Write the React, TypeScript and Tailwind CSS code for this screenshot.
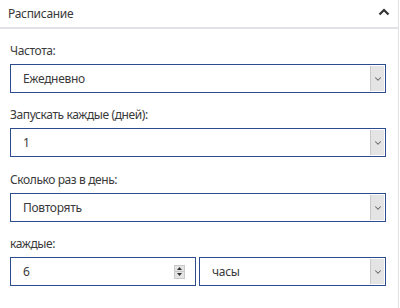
import { ChevronDown } from 'lucide-react';

const font = { fontFamily: '"Noto Sans", "Open Sans", sans-serif' };

const SelectBox = ({ value, className = '' }: { value: string; className?: string }) => (
    <div className={`flex h-[29px] items-stretch border border-[#2c4c8e] bg-white ${className}`}>
        <span className="flex flex-1 items-center pl-[12px] text-[12px] tracking-[-0.3px] text-[#3a3a3a]">{value}</span>
        <div className="my-[1px] mr-[1px] flex w-[14px] items-center justify-center border-l border-[#c9c9c9] bg-[#e4e4e4]">
            <ChevronDown className="h-[10px] w-[10px] text-[#666]" strokeWidth={2.5} />
        </div>
    </div>
);

const Label = ({ children }: { children: string }) => (
    <div className="pb-[4px] text-[12px] leading-[18px] tracking-[-0.4px] text-[#3a3a3a]">{children}</div>
);

export default function App() {
    return (
        <div className="h-[308px] w-[400px] bg-white" style={font}>
            <div className="h-full w-[399px] border-r border-[#e2e2e6]">
                {/* Header */}
                <div className="flex h-[29px] items-center justify-between border-b-2 border-[#e2e2e6] pl-[8px] pr-[8px]">
                    <span className="text-[12px] tracking-[-0.3px] text-[#3a3a3a]">Расписание</span>
                    <svg width="12" height="8" viewBox="0 0 12 8" className="mb-[3px]">
                        <path d="M1.5 6.5 L6 2 L10.5 6.5" fill="none" stroke="#333" strokeWidth="2.2" />
                    </svg>
                </div>

                <div className="flex flex-col pl-[10px] pr-[12px] pt-[13px]">
                    <Label>Частота:</Label>
                    <SelectBox value="Ежедневно" />

                    <div className="h-[13px]" />
                    <Label>Запускать каждые (дней):</Label>
                    <SelectBox value="1" />

                    <div className="h-[14px]" />
                    <Label>Сколько раз в день:</Label>
                    <SelectBox value="Повторять" />

                    <div className="h-[13px]" />
                    <Label>каждые:</Label>
                    <div className="flex gap-[3px]">
                        <div className="flex h-[29px] w-[186px] items-center border border-[#2c4c8e] bg-white pl-[12px] pr-[10px]">
                            <span className="flex-1 text-[12px] text-[#3a3a3a]">6</span>
                            <div className="flex h-[14px] w-[11px] flex-col border border-[#c9c9c9] bg-[#e4e4e4]">
                                <div className="flex flex-1 items-center justify-center border-b border-[#c9c9c9]">
                                    <svg width="5" height="3" viewBox="0 0 5 3"><path d="M0 3 L2.5 0 L5 3 Z" fill="#333" /></svg>
                                </div>
                                <div className="flex flex-1 items-center justify-center">
                                    <svg width="5" height="3" viewBox="0 0 5 3"><path d="M0 0 L2.5 3 L5 0 Z" fill="#333" /></svg>
                                </div>
                            </div>
                        </div>
                        <SelectBox value="часы" className="flex-1" />
                    </div>
                </div>
            </div>
        </div>
    );
}
